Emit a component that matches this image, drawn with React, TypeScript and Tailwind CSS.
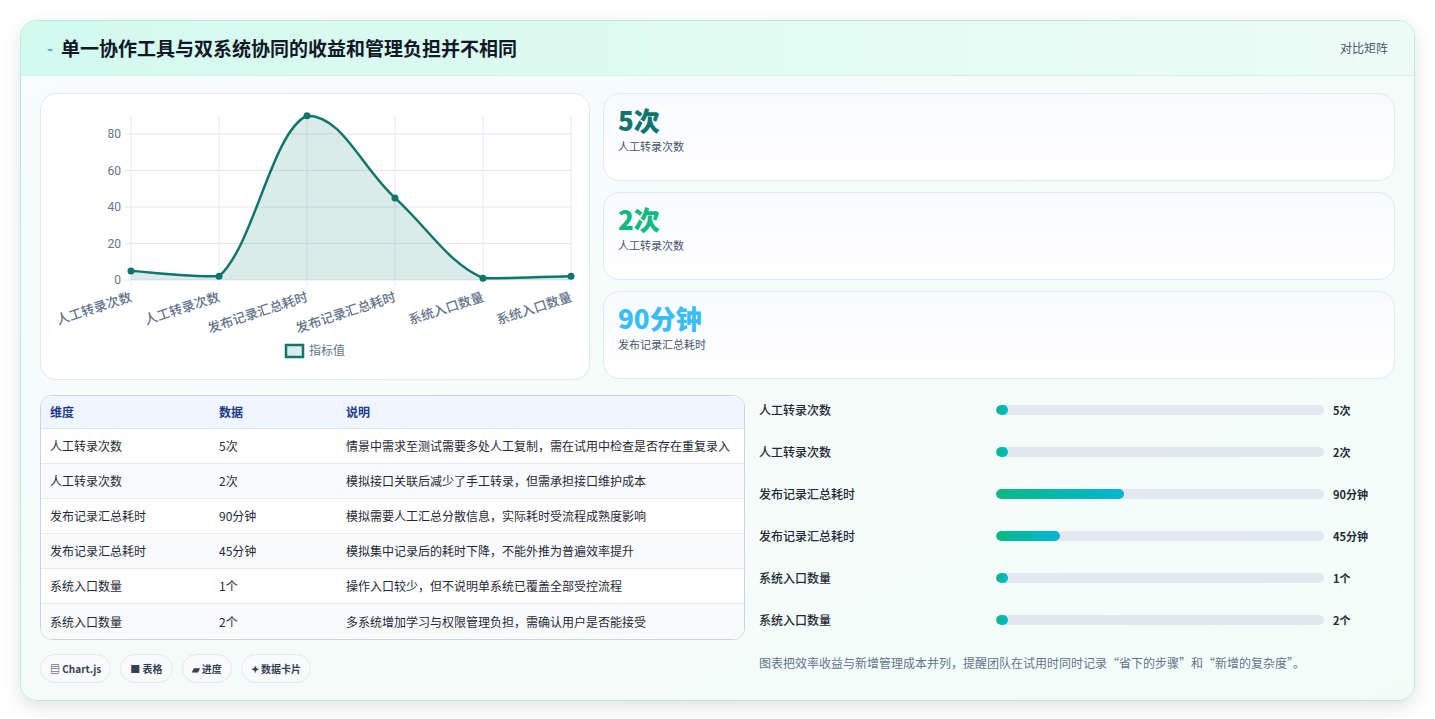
import React from 'react';

const font = { fontFamily: '"Noto Sans CJK SC", "Noto Sans", sans-serif' };

const labels = ['人工转录次数', '人工转录次数', '发布记录汇总耗时', '发布记录汇总耗时', '系统入口数量', '系统入口数量'];
const values = [5, 2, 90, 45, 1, 2];

const X0 = 90, X1 = 530, Y0 = 186, PER = 1.825;
const pts = values.map((v, i) => [X0 + (i * (X1 - X0)) / 5, Y0 - v * PER]);

function curvePath() {
    let d = `M${pts[0][0]},${pts[0][1]}`;
    for (let i = 0; i < pts.length - 1; i++) {
        const p0 = pts[i - 1] || pts[i];
        const p1 = pts[i];
        const p2 = pts[i + 1];
        const p3 = pts[i + 2] || p2;
        const t = 0.2;
        const lo = Math.min(p1[1], p2[1]), hi = Math.max(p1[1], p2[1]);
        const clamp = (y: number) => Math.max(lo, Math.min(hi, y));
        const c1 = [p1[0] + (p2[0] - p0[0]) * t, clamp(p1[1] + (p2[1] - p0[1]) * t)];
        const c2 = [p2[0] - (p3[0] - p1[0]) * t, clamp(p2[1] - (p3[1] - p1[1]) * t)];
        d += ` C${c1[0]},${c1[1]} ${c2[0]},${c2[1]} ${p2[0]},${p2[1]}`;
    }
    return d;
}

const LineChart: React.FC = () => {
    const line = curvePath();
    const area = `${line} L${X1},${Y0} L${X0},${Y0} Z`;
    return (
        <svg width="549" height="286" viewBox="0 0 549 286">
            {[0, 20, 40, 60, 80].map(v => (
                <g key={v}>
                    <line x1={X0 - 6} x2={X1} y1={Y0 - v * PER} y2={Y0 - v * PER} stroke="#e2e8f0" />
                    <text x={X0 - 10} y={Y0 - v * PER + 4} textAnchor="end" fontSize="12" fill="#64748b" fontFamily="Roboto, sans-serif">{v}</text>
                </g>
            ))}
            {pts.map(([x], i) => (
                <line key={i} x1={x} x2={x} y1={22} y2={Y0 + 6} stroke="#e2e8f0" />
            ))}
            <path d={area} fill="#0f766e" fillOpacity="0.15" />
            <path d={line} fill="none" stroke="#0f766e" strokeWidth="2.5" />
            {pts.map(([x, y], i) => (
                <circle key={i} cx={x} cy={y} r="3.5" fill="#0f766e" />
            ))}
            {pts.map(([x], i) => (
                <text key={i} x={x} y={Y0 + 21} textAnchor="end" fontSize="13" fontWeight="500" fill="#64748b" transform={`rotate(-18 ${x} ${Y0 + 16})`} style={font}>{labels[i]}</text>
            ))}
            <rect x="245" y="251" width="17" height="12" fill="#0f766e" fillOpacity="0.15" stroke="#0f766e" strokeWidth="2.5" />
            <text x="268" y="261" fontSize="12" fill="#64748b" style={font}>指标值</text>
        </svg>
    );
};

const stats = [
    { v: '5次', l: '人工转录次数', c: 'text-[#0f766e]' },
    { v: '2次', l: '人工转录次数', c: 'text-[#10b981]' },
    { v: '90分钟', l: '发布记录汇总耗时', c: 'text-[#38bdf8]' },
];

const rows = [
    ['人工转录次数', '5次', '情景中需求至测试需要多处人工复制，需在试用中检查是否存在重复录入'],
    ['人工转录次数', '2次', '模拟接口关联后减少了手工转录，但需承担接口维护成本'],
    ['发布记录汇总耗时', '90分钟', '模拟需要人工汇总分散信息，实际耗时受流程成熟度影响'],
    ['发布记录汇总耗时', '45分钟', '模拟集中记录后的耗时下降，不能外推为普遍效率提升'],
    ['系统入口数量', '1个', '操作入口较少，但不说明单系统已覆盖全部受控流程'],
    ['系统入口数量', '2个', '多系统增加学习与权限管理负担，需确认用户是否能接受'],
];

const bars = [
    ['人工转录次数', '5次', 0],
    ['人工转录次数', '2次', 0],
    ['发布记录汇总耗时', '90分钟', 39],
    ['发布记录汇总耗时', '45分钟', 19.5],
    ['系统入口数量', '1个', 0],
    ['系统入口数量', '2个', 0],
] as const;

const pills = ['▤ Chart.js', '■ 表格', '▰ 进度', '✦ 数据卡片'];

export default function App() {
    return (
        <div className="min-h-[719px] bg-white p-5" style={font}>
            <div className="overflow-hidden rounded-2xl border border-[#b9ecdf] bg-gradient-to-br from-[#f7fcfd] to-[#f2fdf8] shadow-[0_6px_18px_rgba(15,23,42,0.12)]">
                <div className="flex h-[55px] items-center justify-between border-b border-[#d5eef0] bg-gradient-to-r from-[#d2faee] to-[#eefcf7] px-[26px]">
                    <div className="flex items-center gap-2">
                        <span className="text-[10px] text-[#3b82f6]">⌁</span>
                        <h1 className="text-[19px] font-bold text-[#111827]">单一协作工具与双系统协同的收益和管理负担并不相同</h1>
                    </div>
                    <span className="text-xs text-[#475569]">对比矩阵</span>
                </div>
                <div className="px-[19px] pb-[17px] pt-[17px]">
                    <div className="flex gap-[13px]">
                        <div className="h-[287px] w-[550px] shrink-0 rounded-2xl border border-[#e2e8f0] bg-white">
                            <LineChart />
                        </div>
                        <div className="flex flex-1 flex-col gap-[11px]">
                            {stats.map((s, i) => (
                                <div key={i} className="h-[88px] rounded-2xl border border-[#dbeafe] bg-gradient-to-b from-[#f8faff] to-white px-[14px] pt-[8px]">
                                    <div className={`text-[26px] font-extrabold leading-[36px] ${s.c}`}>{s.v}</div>
                                    <div className="text-[11px] text-[#475569]">{s.l}</div>
                                </div>
                            ))}
                        </div>
                    </div>
                    <div className="mt-[15px] flex gap-[14px]">
                        <div className="w-[705px] shrink-0">
                            <div className="overflow-hidden rounded-xl border border-[#cbd5e1] bg-white text-xs">
                                <div className="flex h-[33px] items-center border-b border-[#dbe3ee] bg-[#eff6ff] font-bold text-[#1e3a8a]">
                                    <div className="w-[178px] pl-[9px]">维度</div>
                                    <div className="w-[127px]">数据</div>
                                    <div>说明</div>
                                </div>
                                {rows.map((r, i) => (
                                    <div key={i} className={`flex h-[35px] items-center text-[#1f2937] ${i < rows.length - 1 ? 'border-b border-[#e5e9f0]' : ''} ${i % 2 === 1 ? 'bg-[#f8fafc]' : 'bg-white'}`}>
                                        <div className="w-[178px] pl-[9px]">{r[0]}</div>
                                        <div className="w-[127px]">{r[1]}</div>
                                        <div>{r[2]}</div>
                                    </div>
                                ))}
                            </div>
                            <div className="mt-[14px] flex gap-[9px]">
                                {pills.map(p => (
                                    <span key={p} className="flex h-[29px] items-center rounded-full border border-[#e2e8f0] bg-[#f8fafc] px-[9px] text-[10px] font-bold text-[#334155]">{p}</span>
                                ))}
                            </div>
                        </div>
                        <div className="-mt-[6px] flex-1 pr-[20px]">
                            {bars.map(([l, v, w], i) => (
                                <div key={i} className="flex h-[42px] items-center">
                                    <div className="w-[237px] text-xs font-medium text-[#1f2937]">{l}</div>
                                    <div className="h-[10px] w-[328px] overflow-hidden rounded-full bg-[#e2e8f0]">
                                        <div className="h-full rounded-full bg-gradient-to-r from-[#10b981] to-[#06b6d4]" style={{ width: w ? `${w}%` : '12px' }} />
                                    </div>
                                    <div className="ml-[9px] text-[11px] font-bold text-[#1f2937]">{v}</div>
                                </div>
                            ))}
                            <p className="mt-[14px] text-xs text-[#64748b]">图表把效率收益与新增管理成本并列，提醒团队在试用时同时记录“省下的步骤”和“新增的复杂度”。</p>
                        </div>
                    </div>
                </div>
            </div>
        </div>
    );
}
